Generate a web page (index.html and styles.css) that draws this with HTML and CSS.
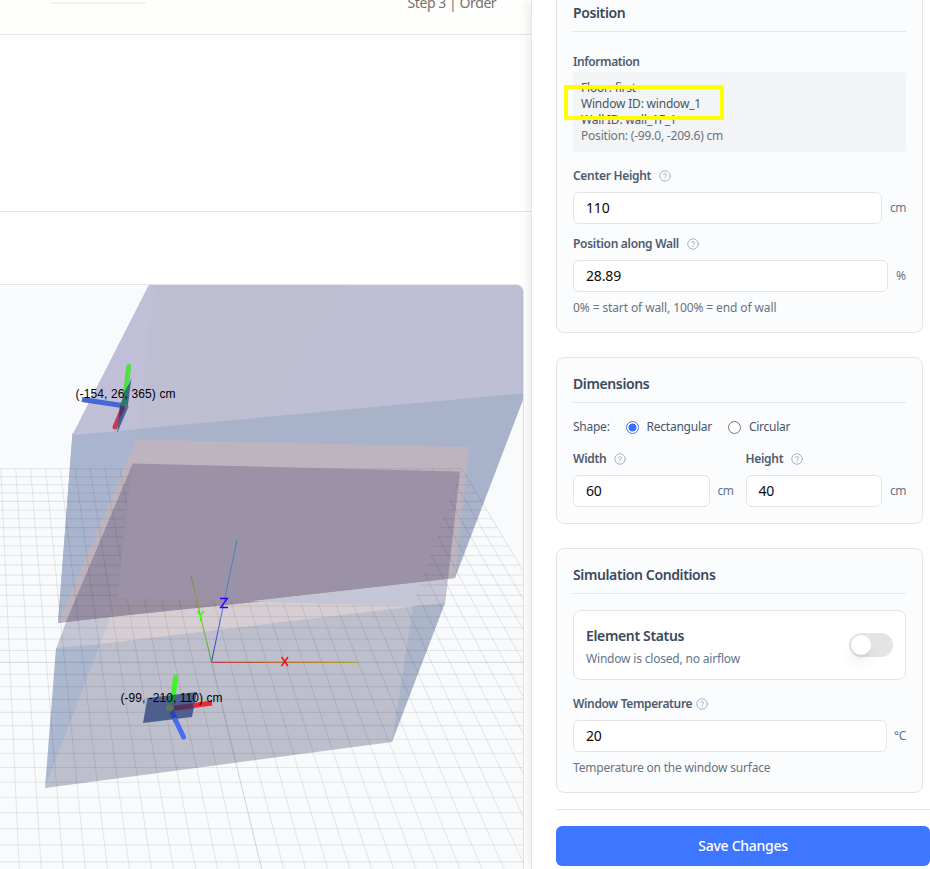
FILE: index.html
```html
<!DOCTYPE html>
<html lang="en">
<head>
<meta charset="utf-8">
<title>Window settings</title>
<link rel="stylesheet" href="styles.css">
</head>
<body>
<svg width="0" height="0" class="defs"><symbol id="help" viewBox="0 0 24 24"><circle cx="12" cy="12" r="10.5"/><path d="M9.1 9a3 3 0 0 1 5.8 1c0 2-2.9 2.6-2.9 4M12 17.2v.4"/></symbol></svg>
<div class="app">
  <main class="main">
    <header class="steps"><span class="progress"></span><span class="step">Step 3 | Order</span></header>
    <div class="toolbar"></div>
    <div class="canvas">
      <svg class="scene" viewBox="0 285 523 584" width="523" height="584">
        <defs>
          <clipPath id="outside"><path clip-rule="evenodd" d="M0 285H523V869H0Z M131 464L460 471.500L413 606L117 598Z"/></clipPath>
          <linearGradient id="gx" gradientUnits="userSpaceOnUse" x1="212" y1="0" x2="358" y2="0"><stop stop-color="#b8404a"/><stop offset=".5" stop-color="#b56e2e"/><stop offset="1" stop-color="#aea03a"/></linearGradient>
          <linearGradient id="gy" gradientUnits="userSpaceOnUse" x1="0" y1="662" x2="0" y2="576"><stop stop-color="#42b63e"/><stop offset=".45" stop-color="#86c43c"/><stop offset="1" stop-color="#7c8838"/></linearGradient>
          <linearGradient id="gz" gradientUnits="userSpaceOnUse" x1="0" y1="662" x2="0" y2="540"><stop stop-color="#3b30c8"/><stop offset=".5" stop-color="#4a80d8"/><stop offset="1" stop-color="#3b87b5"/></linearGradient>
        </defs>
        <!-- upper room -->
        <path fill="#a8b3ca" d="M72.500 433L523 391V400L455 578L58 623Z"/>
        <path fill="#a9b5cf" d="M72.500 434L138 428L117 600L58 623Z"/>
        <path fill="#bdbed1" d="M149 285H523V393L72.500 435Z"/>
        <path fill="#c1bfd7" d="M149 285H155L138 429L72.500 435Z"/>
        <path fill="#bebfd4" d="M345 285H523V393L274 416Z"/>
        <!-- slab -->
        <path fill="#bdb4c0" d="M136 439.500L469 447L455 578L58 623Z"/>
        <!-- lower room -->
        <path fill="#c4c6d5" d="M66 622L448 579L445 604L56 649Z"/>
        <path fill="#d6ced3" d="M117 598L413 606L413 608L100 646Z"/>
        <path fill="#9b92a8" d="M133 463.500L460 471.500L448 579L66 622Z"/>
        <path fill="#978fa3" d="M133 463.500L117 598L110 617L66 622Z"/>
        <path fill="#9c8fa1" d="M117 598L262 601.500L109.500 617Z"/>
        <path fill="#abb8d0" d="M56 648L102 643.800V650L45 788Z"/>
        <path fill="#abb5ca" d="M411 606.600L445 603L392 742L388 742Z"/>
        <path fill="#bebfcd" d="M100 644L413 606.500L392 742L45 788Z"/>
        <g id="grid" class="grid" clip-path="url(#outside)"></g>
        <!-- origin axes -->
        <path stroke="url(#gz)" d="M211.500 662L237 540"/>
        <path stroke="url(#gy)" d="M211.500 662L191 575.500"/>
        <path fill="url(#gx)" d="M211.500 661.800H358V663H211.500Z"/>
        <g class="letters"><path stroke="#f0001c" d="M281.500 657L288 666M288 657L281.500 666"/><path stroke="#30ff00" d="M197 611L200.500 615.500L204 611M200.500 615.500V621"/><path stroke="#2b00ff" d="M220 598.500H227.500L220.500 607.500H228"/></g>
        <!-- upper window -->
        <g class="rods"><path stroke="#4469d4" stroke-linecap="butt" d="M122 405.500L82 399.500"/><path stroke="#4fdf48" d="M128.700 366.500L125.500 394"/><path stroke="#c83a50" d="M123 408L115 427"/></g>
        <path fill="#35598f" fill-opacity=".85" d="M131.500 378L127.500 409L117 433.500L120 405Z"/>
        <path fill="#277c68" d="M124 392L129 384L126.500 404L121 406Z"/>
        <path fill="#4a3867" d="M120 406L126 406L122 414L119 418Z"/>
        <circle cx="126.500" cy="407" r="2" fill="#60785f"/>
        <!-- lower window -->
        <g class="rods"><path stroke="#3bf527" stroke-linecap="butt" d="M176 675L172 705"/><path stroke="#ee2731" stroke-linecap="butt" d="M171 708.500L212 703"/></g>
        <path fill="#4c5f8f" d="M147.500 698L197 692L192 717L143 723Z"/>
        <path class="rod" stroke="#238251" d="M173 695L171.500 704"/>
        <path class="rod" stroke="#5c305b" d="M174 708.200L193 705.700"/>
        <path class="rod" stroke="#2947a9" d="M171 710L176 721"/>
        <path class="rod" stroke="#486df0" stroke-linecap="round" d="M175.500 720L183.500 737"/>
        <circle cx="169.500" cy="708" r="3.500" fill="#637555"/>
        <text x="75.500" y="397.500" textLength="100">(-154, 26, 365) cm</text>
        <text x="120.500" y="702" textLength="102">(-99, -210, 110) cm</text>
      </svg>
    </div>
  </main>

  <aside class="panel">
    <section class="card card-top">
      <h2>Position</h2>
      <div class="label info-label">Information</div>
      <div class="info">
        <div>Floor: first</div>
        <div>Window ID: window_1</div>
        <div>Wall ID: wall_1F_1</div>
        <div class="muted">Position: (-99.0, -209.6) cm</div>
        <span class="highlight"></span>
      </div>
      <div class="label"><span>Center Height</span><svg class="help"><use href="#help"/></svg></div>
      <div class="field"><div class="input">110</div><span class="unit cm">cm</span></div>
      <div class="label next"><span>Position along Wall</span><svg class="help"><use href="#help"/></svg></div>
      <div class="field"><div class="input">28.89</div><span class="unit pct">%</span></div>
      <p class="hint range-hint">0% = start of wall, 100% = end of wall</p>
    </section>

    <section class="card">
      <h2>Dimensions</h2>
      <div class="shape"><span>Shape:</span><i class="radio on"></i><span>Rectangular</span><i class="radio"></i><span>Circular</span></div>
      <div class="cols">
        <div>
          <div class="label"><span>Width</span><svg class="help"><use href="#help"/></svg></div>
          <div class="field"><div class="input">60</div><span class="unit cm">cm</span></div>
        </div>
        <div>
          <div class="label"><span>Height</span><svg class="help"><use href="#help"/></svg></div>
          <div class="field"><div class="input">40</div><span class="unit cm">cm</span></div>
        </div>
      </div>
    </section>

    <section class="card">
      <h2>Simulation Conditions</h2>
      <div class="status">
        <div><h3>Element Status</h3><p>Window is closed, no airflow</p></div>
        <span class="toggle"></span>
      </div>
      <div class="label temp"><span>Window Temperature</span><svg class="help"><use href="#help"/></svg></div>
      <div class="field"><div class="input">20</div><span class="unit deg">°C</span></div>
      <p class="hint">Temperature on the window surface</p>
    </section>

    <footer><button type="button">Save Changes</button></footer>
  </aside>
</div>
<script src="grid.js"></script>
</body>
</html>
```
FILE: styles.css
```css
* { box-sizing: border-box; margin: 0; padding: 0; }
body { font: 12px/16px "Noto Sans", sans-serif; background: #fff; overflow: hidden; color: #475569; }
.defs { position: absolute; }
.app { display: grid; grid-template-columns: 531px 399px; height: 869px; overflow: hidden; }
.main { display: flex; flex-direction: column; min-width: 0; }
.steps { height: 35px; display: flex; background: #fefefc; border-bottom: 1px solid #e5e5e3; }
.progress { width: 96px; height: 2px; margin: 2px 0 0 50px; background: #f2f2f1; }
.step { margin: -7px 0 0 261.5px; font-size: 14px; line-height: 20px; letter-spacing: -.42px; color: #78716c; white-space: nowrap; }
.toolbar { height: 177px; border-bottom: 1px solid #e5e5e3; }
.canvas { width: 524px; height: 585px; margin-top: 72px; border: solid #e5e5e5; border-width: 1px 1px 0 0; border-radius: 0 8px 0 0; background: #f9fafc; overflow: hidden; }
.scene { display: block; fill: none; }
.grid { stroke: #000; stroke-opacity: .078; stroke-width: 1.1; }
.grid .center { stroke-opacity: .14; }
.letters { stroke-width: 1.3; }
.rods, .rod { stroke-width: 5; }
.rods { stroke-linecap: round; }
.scene text { font: 12px "Liberation Sans", sans-serif; fill: #000; }

.panel { position: relative; padding-left: 24px; background: #fff; border-left: 1px solid #e5e5e5; box-shadow: -2px 0 10px rgba(0, 0, 0, .09); white-space: nowrap; }
.card { width: 367px; margin-bottom: 24px; padding: 16px; border: 1px solid #e5e5e5; border-radius: 8px; background: #fbfcfe; }
.card-top { padding-top: 0; border-top: 0; border-radius: 0 0 8px 8px; }
h2 { height: 29px; line-height: 20px; font-size: 14px; font-weight: 600; letter-spacing: -.38px; color: #3b495d; border-bottom: 1px solid #e2e8f0; }
.card-top h2 { height: 32px; line-height: 26px; }
.label { display: flex; align-items: center; gap: 8px; height: 16px; margin-bottom: 8px; font-weight: 600; letter-spacing: -.3px; color: #4e5b6f; }
.info-label { margin: 22px 0 2px; letter-spacing: -.42px; }
.info { position: relative; height: 80px; padding: 8px; margin-bottom: 16px; border-radius: 4px; background: #f3f4f6; color: #4b5563; letter-spacing: -.2px; }
.muted { color: #6b7280; }
.highlight { position: absolute; left: -9px; top: 13px; width: 160px; height: 35px; border: 4px solid #ff0; border-radius: 2px; }
.help { width: 12px; height: 12px; fill: none; stroke: #a3aec4; stroke-width: 1.9; stroke-linecap: round; }
.field { display: flex; align-items: center; gap: 8px; }
.input { flex: 1; height: 32px; padding: 0 12px; border: 1px solid #e5e5e5; border-radius: 6px; background: #fff; color: #0a0a0a; font-size: 14px; line-height: 30px; letter-spacing: -.15px; }
.unit { color: #64748b; }
.cm { width: 16px; letter-spacing: -.5px; }
.pct { width: 10px; }
.deg { width: 11px; margin-left: -1px; margin-right: 1px; letter-spacing: -.4px; }
.next { margin-top: 12px; }
.hint { margin-top: 8px; color: #6b7280; letter-spacing: -.19px; }
.range-hint { letter-spacing: -.11px; }
.shape { display: flex; height: 16px; margin: 16px 0; align-items: center; letter-spacing: -.25px; }
.radio { width: 13px; height: 13px; margin: 1px 8px 0 16px; border: 1px solid #767676; border-radius: 50%; background: #fff; }
.radio.on { border-color: #3b76ff; background: radial-gradient(circle, #3b6fff 3.7px, #fff 4.3px); }
.cols { display: grid; grid-template-columns: 1fr 1fr; gap: 12px; }
.status { display: flex; justify-content: space-between; height: 70px; margin: 16px 0; padding: 15px 12px; border: 1px solid #e5e5e5; border-radius: 8px; background: #fff; }
.status h3 { font-size: 14px; line-height: 20px; font-weight: 600; letter-spacing: -.35px; color: #3b495d; }
.status p { margin-top: 5px; color: #64748b; letter-spacing: -.19px; }
.toggle { width: 44px; height: 24px; margin-top: 7px; padding: 2px; border-radius: 12px; background: #e5e4e2; }
.toggle::before { content: ""; display: block; width: 20px; height: 20px; border-radius: 50%; background: #fff; box-shadow: 0 10px 15px -3px rgba(0, 0, 0, .1), 0 4px 6px -4px rgba(0, 0, 0, .15); }
.temp { gap: 4px; letter-spacing: -.37px; }
footer { margin-top: -8px; padding-top: 16px; border-top: 1px solid #e5e5e5; }
button { display: block; width: 100%; height: 40px; padding-bottom: 2px; border: 0; border-radius: 6px; background: #3d77ff; color: #fff; font: 500 14px "Noto Sans", sans-serif; letter-spacing: -.28px; }
```
FILE: grid.js
```js
// Perspective ground grid: 40 x 40 cells centred on the origin.
const g = document.getElementById('grid');
function project(m, n) {
  const w = 1 - 0.01164 * n;
  return [(211.5 + 0.437 * n + 18.34 * m) / w, (662.3 + 4.221 * n) / w];
}
function line(a, b, center) {
  const el = document.createElementNS('http://www.w3.org/2000/svg', 'path');
  el.setAttribute('d', 'M' + a.join(' ') + 'L' + b.join(' '));
  if (center) el.setAttribute('class', 'center');
  g.appendChild(el);
}
for (let i = -20; i <= 20; i++) {
  line(project(i, -20), project(i, 20), i === 0);
  line(project(-20, i), project(20, i), i === 0);
}
```
